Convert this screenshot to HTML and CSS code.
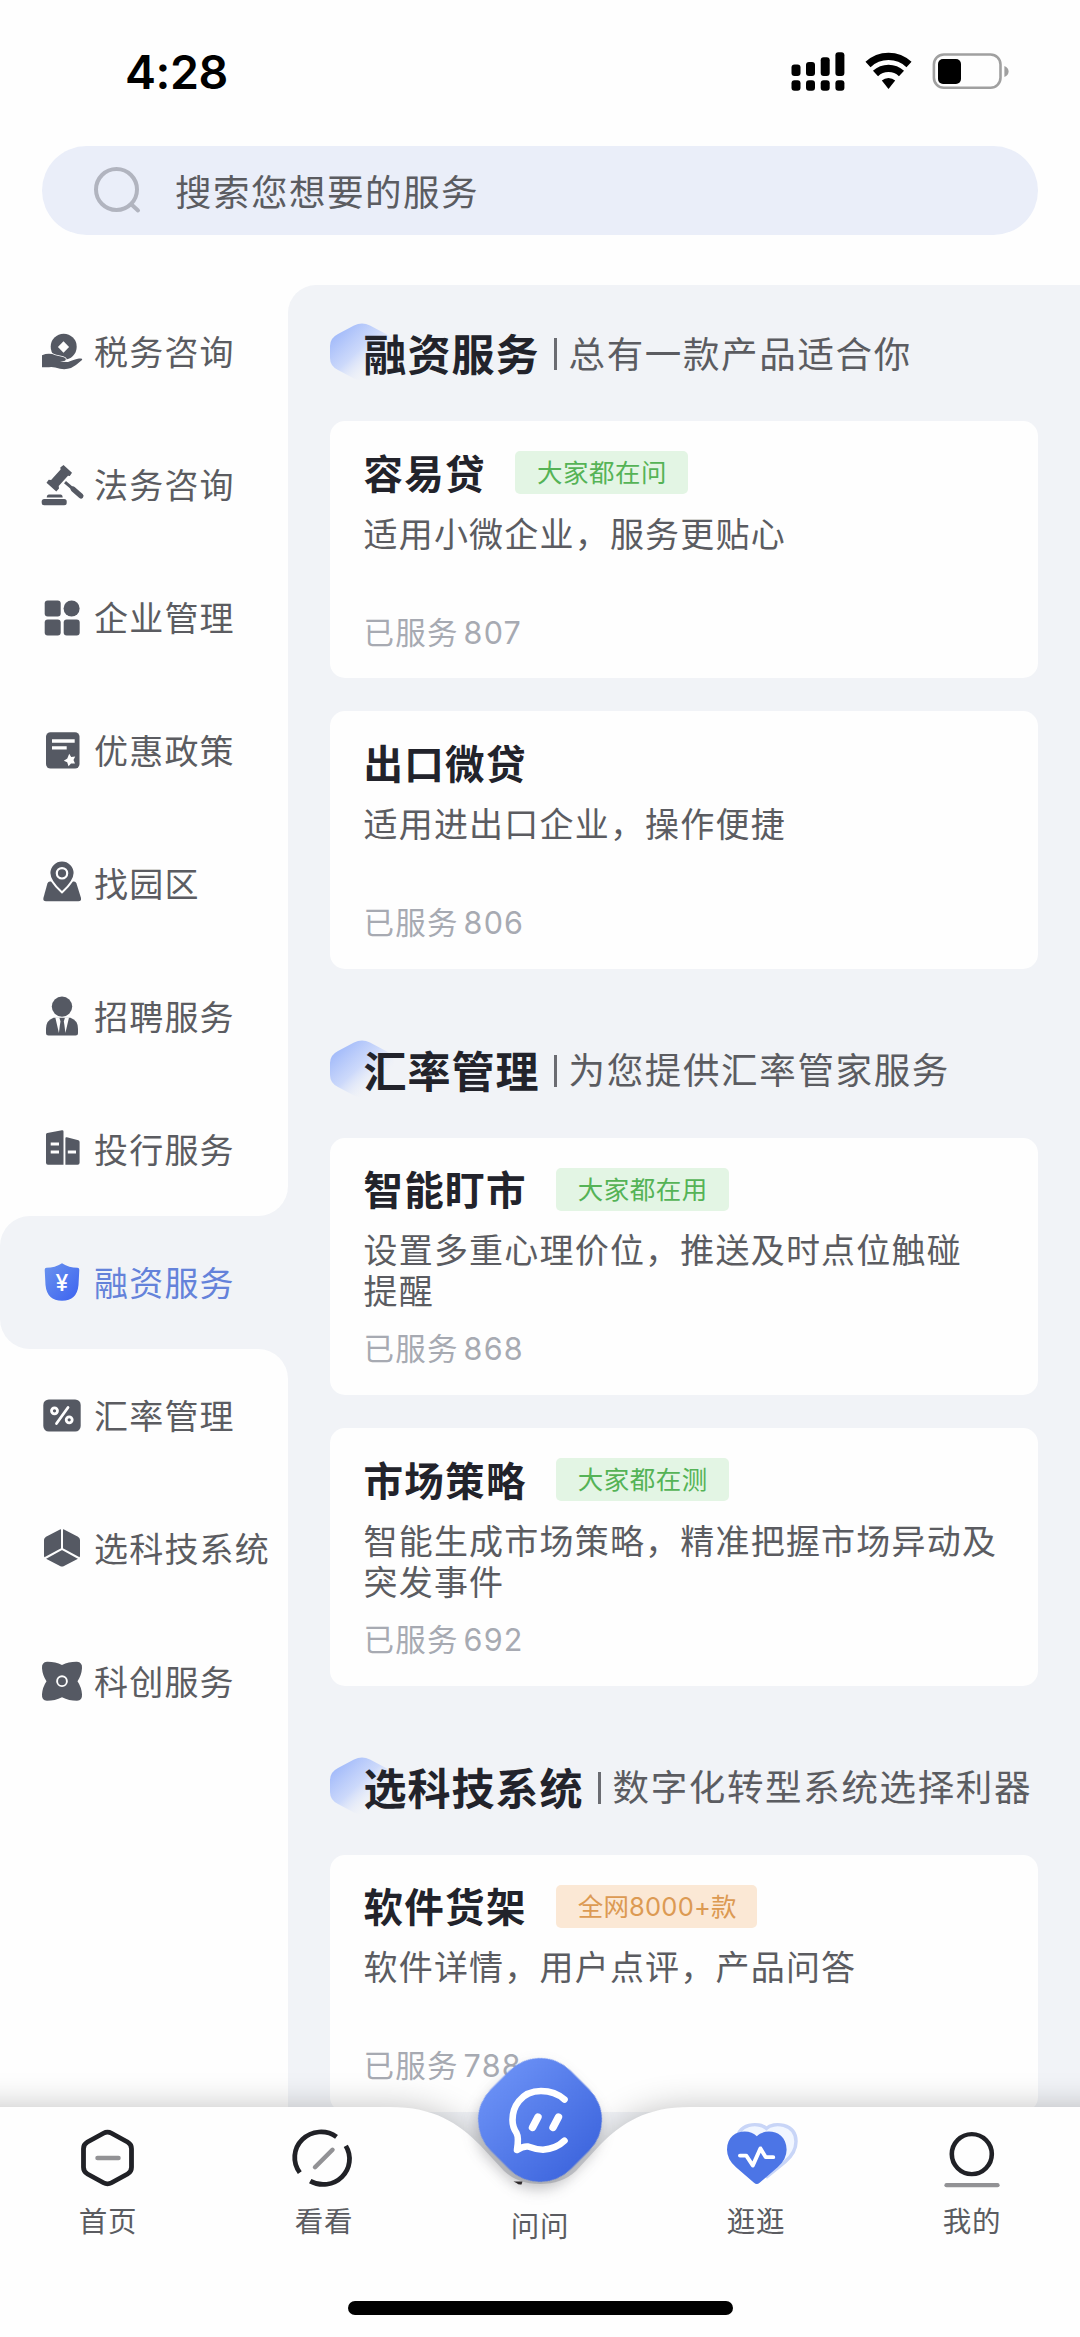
FILE: index.html
```html
<!DOCTYPE html>
<html lang="zh-CN">
<head>
<meta charset="utf-8">
<title>服务</title>
<link rel="stylesheet" href="styles.css">
</head>
<body>
<div class="screen">
  <header class="status">
    <span class="time">4:28</span>
    <svg class="status-icons" width="220" height="40" viewBox="0 0 220 40">
      <rect x="0.5" y="12.5" width="9" height="11.5" rx="3"/><rect x="15" y="10" width="9" height="14" rx="3"/><rect x="29.7" y="5.3" width="9" height="18.7" rx="3"/><rect x="44.4" y="0.3" width="9" height="23.7" rx="3"/>
      <rect x="0.5" y="28.3" width="9" height="10.4" rx="3"/><rect x="15" y="28.3" width="9" height="10.4" rx="3"/><rect x="29.7" y="28.3" width="9" height="10.4" rx="3"/><rect x="44.4" y="28.3" width="9" height="10.4" rx="3"/>
      <g fill="none" stroke="#000" stroke-width="7.4"><path d="M77 12.5a30 30 0 0 1 41 0"/><path d="M84.500 21.500a19 19 0 0 1 26 0"/></g>
      <path d="M90.800 28.600a9.600 9.600 0 0 1 13.400 0l-6.700 8.300z"/>
      <rect x="142.900" y="2.500" width="66.600" height="33.300" rx="10" fill="none" stroke="#a0a0a0" stroke-width="2.600"/>
      <rect x="147" y="7" width="23" height="25" rx="5"/>
      <path d="M213.400 14q4.200 1.800 4.200 5.500t-4.200 5.500z" fill="#a0a0a0"/>
    </svg>
  </header>
  <div class="search">
    <svg width="48" height="48" viewBox="0 0 48 48" fill="none" stroke="#b1b4bf" stroke-width="4" stroke-linecap="round"><circle cx="23.500" cy="23.500" r="20.500"/><path d="M38.500 38.500l6.500 6"/></svg>
    <span>搜索您想要的服务</span>
  </div>
  <div class="content">
    <nav class="side">
      <div class="item"><svg viewBox="0 0 48 48"><circle cx="25.700" cy="18.800" r="13"/><path class="w" d="M25.500 13.200l5.600 5.800-5.600 5.800-5.600-5.800z"/><path d="M4 27.200q7-2.800 13.500 0l7.500 1.800q4.500 1.500 2 3.800l-5 1 8 .2q7-2.800 11-3.400 4-.4 3 1.400-6 5.500-11 8-5 1.800-11 .8-7-2.300-11-1.500H4z" stroke="#fefefe" stroke-width="1.600" paint-order="stroke"/></svg><span>税务咨询</span></div>
      <div class="item"><svg viewBox="0 0 48 48"><path d="M25.500 4l8.500 7.700-2.200 3.300-1.800-.3-9.300 10.200.3 2.500-2.700 3-9.800-8.700 2.200-3 2.400.2 9.500-10.300-.3-2.200z"/><path d="M27 21.200l17 14.500" stroke-width="3" stroke="#555963"/><path d="M35 28l8 7" stroke="#555963" stroke-width="5" stroke-linecap="round"/><path d="M11 33.600h11.500q2 0 2.200 2.900H8.700q.2-2.900 2.300-2.900z"/><rect x="3.700" y="38" width="25" height="6.300" rx="2.500"/></svg><span>法务咨询</span></div>
      <div class="item"><svg viewBox="0 0 48 48"><rect x="6.700" y="6.500" width="16" height="16" rx="3"/><circle cx="33.600" cy="14.500" r="8"/><rect x="6.700" y="25.500" width="16" height="16" rx="3"/><rect x="25.700" y="25.500" width="16" height="16" rx="3"/></svg><span>企业管理</span></div>
      <div class="item"><svg viewBox="0 0 48 48"><rect x="8" y="5.200" width="33.500" height="36.300" rx="4.500"/><path class="w" d="M14 12.300h22.700v3.400H14zM14 19.200h14.700v3.200H14z"/><path class="w" d="M31.200 26.700l2 3.300 4-.4-1.700 3.500 1.500 3.400-4-.1-2.500 2.800-1.300-3.900-3.400-1.500 3.500-2.200z"/></svg><span>优惠政策</span></div>
      <div class="item"><svg viewBox="0 0 48 48"><path d="M12 21.500h24q1.800 0 2.500 2l4.500 14.500q.6 3.200-2.600 3.200H8q-3.200 0-2.600-3.200l4-14.500q.7-2 2.600-2z"/><path d="M24 1.500a11.600 11.600 0 0 1 11.600 11.600q0 7.400-11.600 18-11.600-10.600-11.600-18A11.600 11.600 0 0 1 24 1.500z" stroke="#fefefe" stroke-width="4" paint-order="stroke"/><circle cx="24" cy="13.300" r="5.200" fill="none" stroke="#fefefe" stroke-width="2.200"/></svg><span>找园区</span></div>
      <div class="item"><svg viewBox="0 0 48 48"><circle cx="24" cy="13.600" r="10.200"/><path d="M15.500 24.800h17q7.500 2.500 7.500 11v4.200q0 2.500-2.500 2.500h-27q-2.500 0-2.500-2.500v-4.200q0-8.500 7.500-11z"/><path class="w" d="M17.300 24.500h4l1.200 4-.6 3.500-1 8zM31 24.500h-4l-1.200 4 .6 3.500 1 8z"/></svg><span>招聘服务</span></div>
      <div class="item"><svg viewBox="0 0 48 48"><path d="M8 8.500q0-1.300 1.300-1.500l14.700-2.700q1.500-.2 1.500 1.300v33.200H10q-2 0-2-2zM27.400 12.300q0-1.500 1.500-1l11.500 3q1.200.4 1.200 1.700v20.800q0 2-2 2H27.400z"/><path class="w" d="M12.700 16.600H21v2.900h-8.300zM12.700 24.600H21v2.900h-8.300zM29.800 24.600h8.200v2.900h-8.200z"/></svg><span>投行服务</span></div>
      <div class="item active"><div class="pill"><svg viewBox="0 0 48 48"><defs><linearGradient id="shield" x1="0" y1="0" x2="1" y2="1"><stop offset="0" stop-color="#6a93ee"/><stop offset="1" stop-color="#3c62f0"/></linearGradient></defs><path fill="url(#shield)" d="M24 4.200q7 4.600 15.500 4.600 1.800 0 1.800 2l-.8 15.200Q39 41.700 24 41.700T7.500 26L6.700 10.800q0-2 1.800-2Q17 8.800 24 4.200z"/><text class="yen" x="24" y="31.500" text-anchor="middle">¥</text></svg><span>融资服务</span></div></div>
      <div class="item"><svg viewBox="0 0 48 48"><rect x="5.300" y="7.500" width="37.400" height="32" rx="5.500"/><g fill="none" stroke="#fefefe" stroke-width="2.800" stroke-linecap="round"><circle cx="16.500" cy="18.800" r="3"/><circle cx="31.200" cy="27.800" r="3"/><path d="M30 15.500L18.500 31.500"/></g></svg><span>汇率管理</span></div>
      <div class="item"><svg viewBox="0 0 48 48"><path d="M24 4q1 0 2 .6l14 7.200q2 1.200 2 3.200v16q0 1.500-2 2.700l-14 7.300q-2 1-4 0L8 33.700Q6 32.500 6 31V15q0-2 2-3.200l14-7.200q1-.6 2-.6z"/><path d="M24 3v20.800M5.500 34L24 23.800 42.500 34" stroke="#fefefe" stroke-width="2" fill="none"/></svg><span>选科技系统</span></div>
      <div class="item"><svg viewBox="0 0 48 48"><path d="M9 3.700Q17 3.500 24 7q7-3.500 15-3.300 5.500.5 5 6.500-.5 7-4.500 13 4 6 4.500 13 .5 6-5 6.500-8 0-15-3.500-7 3.500-15 3.500-5.500-.5-5-6.500.5-7 4.500-13-4-6-4.500-13-.5-6 5-6.500z"/><circle cx="24" cy="23.200" r="4.900" fill="none" stroke="#fefefe" stroke-width="1.900"/></svg><span>科创服务</span></div>
      <div class="rest"></div>
    </nav>
    <main class="panel">
      <h2><svg class="gem" width="64" height="58" viewBox="0 0 64 58"><defs><linearGradient id="gem" x1="0.1" y1="0.22" x2="0.72" y2="0.8"><stop offset="0" stop-color="#a6bdfa"/><stop offset="0.5" stop-color="#c8d6fb" stop-opacity="0.9"/><stop offset="1" stop-color="#f1f3f7" stop-opacity="0"/></linearGradient></defs><path fill="url(#gem)" d="M24 2.500q8-4 16 0L56 11q8 4 8 12v12q0 8-8 12l-16 8.500q-8 4-16 0L8 47q-8-4-8-12V23q0-8 8-12z"/></svg><b>融资服务</b><i></i><span>总有一款产品适合你</span></h2>
      <article class="card"><h3><b>容易贷</b><em>大家都在问</em></h3><p>适用小微企业，服务更贴心</p><small>已服务<s>807</s></small></article>
      <article class="card"><h3><b>出口微贷</b></h3><p>适用进出口企业，操作便捷</p><small>已服务<s>806</s></small></article>
      <h2><svg class="gem" width="64" height="58" viewBox="0 0 64 58"><path fill="url(#gem)" d="M24 2.500q8-4 16 0L56 11q8 4 8 12v12q0 8-8 12l-16 8.500q-8 4-16 0L8 47q-8-4-8-12V23q0-8 8-12z"/></svg><b>汇率管理</b><i></i><span>为您提供汇率管家服务</span></h2>
      <article class="card"><h3><b>智能盯市</b><em>大家都在用</em></h3><p>设置多重心理价位，推送及时点位触碰<br>提醒</p><small>已服务<s>868</s></small></article>
      <article class="card"><h3><b>市场策略</b><em>大家都在测</em></h3><p>智能生成市场策略，精准把握市场异动及<br>突发事件</p><small>已服务<s>692</s></small></article>
      <h2><svg class="gem" width="64" height="58" viewBox="0 0 64 58"><path fill="url(#gem)" d="M24 2.500q8-4 16 0L56 11q8 4 8 12v12q0 8-8 12l-16 8.500q-8 4-16 0L8 47q-8-4-8-12V23q0-8 8-12z"/></svg><b>选科技系统</b><i></i><span>数字化转型系统选择利器</span></h2>
      <article class="card"><h3><b>软件货架</b><em class="orange">全网8000+款</em></h3><p>软件详情，用户点评，产品问答</p><small>已服务<s>788</s></small></article>
    </main>
  </div>
  <footer class="tabbar">
    <svg class="bar-shape" width="1080" height="231" viewBox="0 0 1080 231"><path d="M-40 0H390C434 0 458 16 480 38L504 64Q518 77 540 77T576 64L600 38C622 16 646 0 690 0H1120V231H-40z"/></svg>
    <div class="tab"><svg width="76" height="66" viewBox="0 0 76 68" preserveAspectRatio="none" fill="none"><path d="M33.500 8.500q4-2.300 8 0l16 9q4 2.300 4 7v19q0 4.700-4 7l-16 9q-4 2.300-8 0l-16-9q-4-2.300-4-7v-19q0-4.700 4-7z" stroke="#202126" stroke-width="4.800"/><path d="M27.500 34h21" stroke="#929295" stroke-width="4.500" stroke-linecap="round"/></svg>首页</div>
    <div class="tab"><svg width="76" height="66" viewBox="0 0 76 68" preserveAspectRatio="none" fill="none"><g stroke="#202126" stroke-width="4.800"><path d="M50.500 12.200A26.300 26.300 0 0 0 13.800 49"/><path d="M59.800 21.500A26.300 26.300 0 0 1 24.200 57.800"/></g><path d="M46.500 25.500L29 43.500" stroke="#929295" stroke-width="4.500" stroke-linecap="round"/></svg>看看</div>
    <div class="tab center"><svg width="76" height="66"></svg>问问</div>
    <div class="tab"><svg width="76" height="66" viewBox="0 0 76 68" preserveAspectRatio="none" fill="none"><path d="M48.500 3.500C41-3.500 19-2 19 17q0 12 12 21l18 15 18-15q11-9.500 11-21C78-2 55-3.500 48.500 3.500z" fill="#f1f6ff" stroke="#c8d5f7" stroke-width="3.500"/><path d="M38.800 11.500C31 3 9 5 9 25.500q0 10 9 18l18 16q2.800 2.500 5.600 0l18-16q9-8 9-18C68.600 5 46.600 3 38.800 11.500z" fill="#4c75e6"/><path d="M22 31.500h6.200l6.600 10.300 7.600-17.700 5.300 9h7.500" stroke="#fff" stroke-width="4" stroke-linecap="round" stroke-linejoin="round"/></svg>逛逛</div>
    <div class="tab"><svg width="76" height="66" viewBox="0 0 76 68" preserveAspectRatio="none" fill="none"><ellipse cx="37.800" cy="30" rx="20" ry="20.600" stroke="#202126" stroke-width="4.600"/><path d="M12.500 62h51" stroke="#929295" stroke-width="4.300" stroke-linecap="round"/></svg>我的</div>
    <svg class="ask" width="124" height="124" viewBox="0 0 124 124" fill="none"><defs><linearGradient id="ask" x1="0" y1="0" x2="1" y2="0"><stop offset="0" stop-color="#688ef4"/><stop offset="1" stop-color="#4068df"/></linearGradient></defs>
      <path d="M35.500 123.500h9l-1 3q-3 .5-5-1.500z" fill="#2b2524"/>
      <rect class="gemshape" x="5.500" y="5.500" width="113" height="113" rx="43.500" transform="rotate(45 62 62)" fill="url(#ask)"/>
      <g stroke="#fff" stroke-width="6.600" stroke-linecap="round" stroke-linejoin="round"><path d="M86.500 41.500Q77 33 63 33 49 33 41 43 34.500 51 34.500 62q0 7 4 13 2.500 4.500.5 17 6-4 11-3.500 8 3 15 3.200 13-.7 21.500-9"/><path d="M60 59L54.500 69.500M80.500 59L75 69.500" stroke-width="7.400"/></g></svg>
    <div class="home"></div>
  </footer>
</div>
</body>
</html>
```
FILE: styles.css
```css
* { box-sizing: border-box; }
body {
  margin: 0;
  font-family: Inter, "Noto Sans CJK SC", sans-serif;
  color: #5b5c61;
}
.screen {
  position: relative;
  width: 1080px;
  height: 2337px;
  overflow: hidden;
  background: #fefefe;
}
svg { display: block; flex: none; overflow: visible; }

.status {
  display: flex;
  justify-content: space-between;
  align-items: center;
  height: 146px;
  padding: 0 69px 2px 125px;
}
.time { font-size: 46.500px; font-weight: 600; letter-spacing: -0.400px; color: #000; line-height: 60px; }

.search {
  display: flex;
  align-items: center;
  gap: 34px;
  height: 89px;
  margin: 0 42px 50px;
  padding: 0 0 1px 51px;
  border-radius: 45px;
  background: #eaeef9;
  font-size: 36.500px;
  letter-spacing: 1.500px;
}

.content { display: flex; height: 2052px; }
.side {
  display: flex;
  flex-direction: column;
  width: 288px;
  background: #f1f3f7;
}
.item {
  display: flex;
  align-items: center;
  gap: 8px;
  height: 133px;
  flex: none;
  padding-left: 38px;
  background: #fefefe;
  font-size: 34px;
  letter-spacing: 1.200px;
  white-space: nowrap;
}
.item span { padding-bottom: 3px; }
.item svg { width: 48px; height: 48px; fill: #555963; }
.item .w { fill: #fefefe; }
.item:has(+ .active) { border-bottom-right-radius: 30px; }
.item.active {
  padding: 0;
  color: #6482da;
  background: linear-gradient(#fefefe, #fefefe) 0 0 / 50% 100% no-repeat;
}
.active + .item { border-top-right-radius: 30px; }
.pill {
  display: flex;
  align-items: center;
  gap: 8px;
  width: 288px;
  height: 133px;
  padding-left: 38px;
  border-radius: 30px 0 0 30px;
  background: #f1f3f7;
}
.item .yen { fill: #fff; font-size: 23px; font-weight: 500; letter-spacing: 0; }
.rest { flex: 1; background: #fefefe; }

.panel {
  flex: 1;
  display: flex;
  flex-direction: column;
  gap: 33.300px;
  padding: 0 42px 0 41.500px;
  border-top-left-radius: 28px;
  background: #f1f3f7;
}
h2 {
  position: relative;
  display: flex;
  align-items: center;
  flex: none;
  height: 136px;
  margin: 0 0 -33.300px;
  padding: 0 0 2px 34px;
  font-size: 36.500px;
  font-weight: 400;
  letter-spacing: 1.650px;
  white-space: nowrap;
}
h2 b { position: relative; font-size: 43px; font-weight: 700; letter-spacing: 1px; color: #22232b; }
h2 i { width: 3px; height: 32px; margin: 4px 12px 0 14px; background: #6b6c72; }
h2 span { position: relative; }
.gem { position: absolute; left: 0; top: 38px; }

.card {
  flex: none;
  height: 257.200px;
  padding: 30px 30px 0 34px;
  border-radius: 15px;
  background: #fefefe;
}
h3 {
  display: flex;
  align-items: center;
  gap: 29px;
  height: 43px;
  margin: 0 0 19.500px;
  font-size: 39.500px;
  letter-spacing: 1.300px;
  color: #22232b;
}
h3 b { padding-bottom: 3px; font-weight: 700; }
em {
  height: 43px;
  padding: 0 21px 0 22px;
  border-radius: 5px;
  background: #e3f5e4;
  color: #55b356;
  font: 400 25.500px/43px Inter, "Noto Sans CJK SC", sans-serif;
  letter-spacing: 0.500px;
}
em.orange { padding-right: 20px; background: #fbe8d5; color: #dc9a53; letter-spacing: 0.200px; }
.card p {
  height: 82px;
  margin: 0 -10px 17px 0;
  font-size: 34px;
  line-height: 41px;
  letter-spacing: 1.200px;
  white-space: nowrap;
}
small {
  display: block;
  font-size: 30.500px;
  line-height: 40px;
  letter-spacing: 1.200px;
  color: #a7aab2;
}
s { margin-left: 5px; text-decoration: none; }

.tabbar {
  position: absolute;
  left: 0;
  bottom: 0;
  display: flex;
  width: 1080px;
  height: 230px;
}
.bar-shape {
  position: absolute;
  left: 0;
  top: 0;
  fill: #fefefe;
  filter: drop-shadow(0 0 16px rgba(0, 0, 0, 0.24));
}
.tab {
  position: relative;
  display: flex;
  flex-direction: column;
  align-items: center;
  gap: 13px;
  width: 216px;
  padding-top: 18px;
  font-size: 28.500px;
  line-height: 36px;
  letter-spacing: 0.800px;
}
.tab.center { padding-top: 23px; }
.ask { position: absolute; left: 478px; top: -49px; }
.gemshape { filter: drop-shadow(4px 7px 7px rgba(60, 60, 70, 0.3)); }
.home {
  position: absolute;
  left: 348px;
  bottom: 22px;
  width: 385px;
  height: 14px;
  border-radius: 7px;
  background: #000;
}
```
